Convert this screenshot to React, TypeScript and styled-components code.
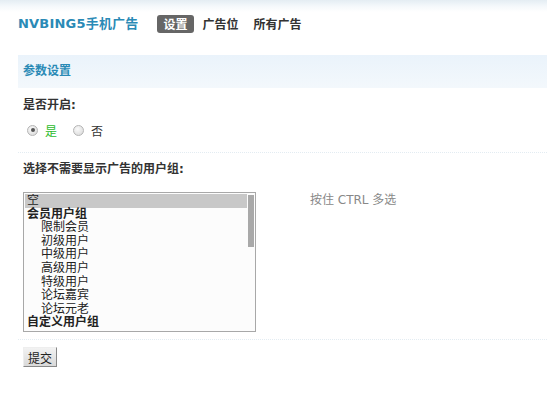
import React, { useState } from "react";
import styled, { createGlobalStyle } from "styled-components";

const GlobalStyle = createGlobalStyle`
  html, body {
    margin: 0;
    padding: 0;
    background: #fff;
  }
  body {
    font-family: "DejaVu Sans", "Noto Sans CJK SC", sans-serif;
    font-size: 12px;
    color: #333;
  }
`;

const Page = styled.div`
  width: 547px;
  height: 400px;
  overflow: hidden;
  background: linear-gradient(#e4edf3 0px, #f4f8fb 6px, #fff 12px);
`;

const Header = styled.div`
  display: flex;
  align-items: center;
  height: 18px;
  padding: 15px 0 0 18px;
`;

const Title = styled.h2`
  margin: 0 19px 0 0;
  font-size: 13px;
  font-weight: bold;
  color: #2a8ab6;
  letter-spacing: 0.2px;
  line-height: 20px;
`;

const Tabs = styled.div`
  display: flex;
  align-items: center;
  gap: 3px;
`;

const Tab = styled.a<{ $active?: boolean }>`
  display: inline-block;
  height: 18px;
  line-height: 20px;
  padding: 0 6px;
  border-radius: 3px;
  font-size: 12px;
  font-weight: bold;
  color: ${(p) => (p.$active ? "#fff" : "#333")};
  background: ${(p) => (p.$active ? "#666" : "transparent")};
  cursor: pointer;
`;

const Content = styled.div`
  padding: 22px 0 0 18px;
`;

const SectionBar = styled.div`
  height: 33px;
  line-height: 33px;
  padding-left: 5px;
  background: linear-gradient(#eaf3fb, #f3f8fc);
  color: #2a8ab6;
  font-weight: bold;
  font-size: 12px;
`;

const Label = styled.div<{ $top: number }>`
  padding: ${(p) => p.$top}px 0 0 5px;
  height: 16px;
  line-height: 16px;
  font-weight: bold;
`;

const RadioRow = styled.div`
  display: flex;
  align-items: center;
  height: 16px;
  padding: 9px 0 0 9px;
`;

const RadioItem = styled.label<{ $checked?: boolean }>`
  display: flex;
  align-items: center;
  gap: 7px;
  margin-right: 16px;
  color: ${(p) => (p.$checked ? "#2cbb2c" : "#333")};
  cursor: pointer;
`;

const Dot = styled.span<{ $checked?: boolean }>`
  position: relative;
  width: 11px;
  height: 11px;
  border-radius: 50%;
  border: 1px solid #b5b5b5;
  background: radial-gradient(circle at 40% 35%, #fafafa, #d6d6d6);
  box-sizing: border-box;
  &::after {
    content: "";
    display: ${(p) => (p.$checked ? "block" : "none")};
    position: absolute;
    left: 2.5px;
    top: 2.5px;
    width: 4px;
    height: 4px;
    border-radius: 50%;
    background: #555;
  }
`;

const Divider = styled.div<{ $top: number }>`
  border-top: 1px dotted #e3ecf2;
  margin-top: ${(p) => p.$top}px;
`;

const FormRow = styled.div`
  display: flex;
  align-items: flex-start;
  padding: 15px 0 0 5px;
`;

const ListBox = styled.div`
  display: flex;
  width: 233px;
  height: 140px;
  border: 1px solid #a8a8a8;
  box-sizing: border-box;
  background: #fcfcfc;
  padding: 1px;
`;

const Options = styled.div`
  flex: 1;
  overflow: hidden;
`;

const Option = styled.div<{ $bold?: boolean; $indent?: boolean; $selected?: boolean }>`
  height: 13.6px;
  line-height: 13.6px;
  font-size: 12px;
  white-space: nowrap;
  font-weight: ${(p) => (p.$bold ? "bold" : "normal")};
  padding-left: ${(p) => (p.$indent ? "16px" : "2px")};
  background: ${(p) => (p.$selected ? "#c8c8c8" : "transparent")};
  color: #222;
`;

const ScrollTrack = styled.div`
  width: 6px;
  margin-left: 1px;
  padding-top: 1px;
`;

const ScrollThumb = styled.div`
  height: 52px;
  background: #a9a9a9;
`;

const Tip = styled.div`
  margin: 1px 0 0 54px;
  color: #888;
  font-size: 12px;
  line-height: 14px;
`;

const SubmitRow = styled.div`
  padding: 7px 0 0 5px;
`;

const Button = styled.button`
  height: 20px;
  padding: 0 4px;
  font-family: "DejaVu Sans", "Noto Sans CJK SC", sans-serif;
  font-size: 12px;
  color: #222;
  background: linear-gradient(#f2f2f2, #d9d9d9);
  border: 1px solid;
  border-color: #eee #888 #888 #eee;
  cursor: pointer;
`;

type Group = { label: string; bold?: boolean; indent?: boolean; selected?: boolean };

const groups: Group[] = [
  { label: "空", selected: true },
  { label: "会员用户组", bold: true },
  { label: "限制会员", indent: true },
  { label: "初级用户", indent: true },
  { label: "中级用户", indent: true },
  { label: "高级用户", indent: true },
  { label: "特级用户", indent: true },
  { label: "论坛嘉宾", indent: true },
  { label: "论坛元老", indent: true },
  { label: "自定义用户组", bold: true },
];

const App = () => {
  const [enabled, setEnabled] = useState(true);

  return (
    <Page>
      <GlobalStyle />
      <Header>
        <Title>NVBING5手机广告</Title>
        <Tabs>
          <Tab $active>设置</Tab>
          <Tab>广告位</Tab>
          <Tab>所有广告</Tab>
        </Tabs>
      </Header>
      <Content>
        <SectionBar>参数设置</SectionBar>
        <Label $top={9}>是否开启:</Label>
        <RadioRow>
          <RadioItem $checked={enabled} onClick={() => setEnabled(true)}>
            <Dot $checked={enabled} />是
          </RadioItem>
          <RadioItem $checked={!enabled} onClick={() => setEnabled(false)}>
            <Dot $checked={!enabled} />否
          </RadioItem>
        </RadioRow>
        <Divider $top={14} />
        <Label $top={8}>选择不需要显示广告的用户组:</Label>
        <FormRow>
          <ListBox>
            <Options>
              {groups.map((g) => (
                <Option key={g.label} $bold={g.bold} $indent={g.indent} $selected={g.selected}>
                  {g.label}
                </Option>
              ))}
            </Options>
            <ScrollTrack>
              <ScrollThumb />
            </ScrollTrack>
          </ListBox>
          <Tip>按住 CTRL 多选</Tip>
        </FormRow>
        <Divider $top={7} />
        <SubmitRow>
          <Button>提交</Button>
        </SubmitRow>
      </Content>
    </Page>
  );
};

export default App;
